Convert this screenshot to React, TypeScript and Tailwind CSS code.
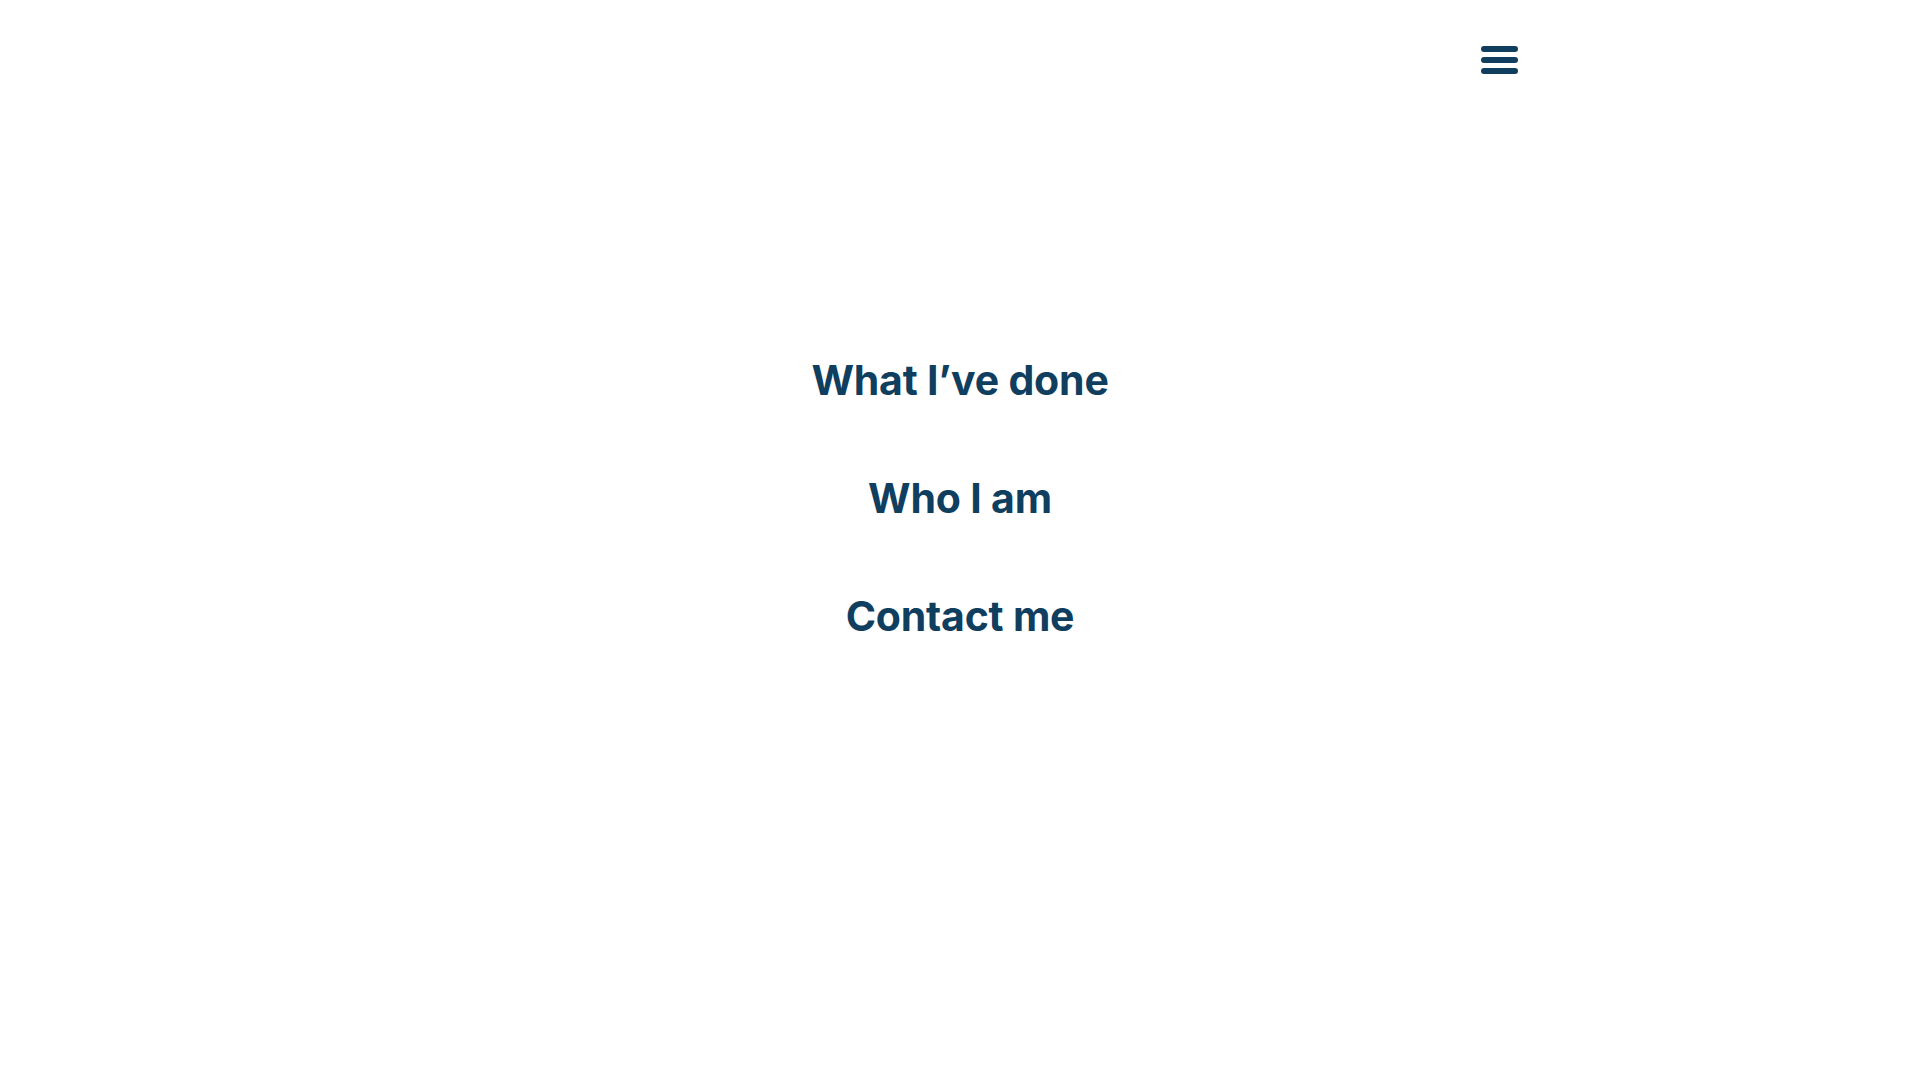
const links = ["What I’ve done", "Who I am", "Contact me"];

export default function App() {
  return (
    <div className="min-h-screen bg-white font-['Inter','Liberation_Sans',sans-serif] text-[#0f3e5f]">
      <header className="mx-auto flex max-w-[1115px] justify-end pt-[46px]">
        <button className="flex flex-col gap-[5px]" aria-label="menu">
          <span className="block h-[6px] w-[37px] rounded-full bg-[#0f3e5f]" />
          <span className="block h-[6px] w-[37px] rounded-full bg-[#0f3e5f]" />
          <span className="block h-[6px] w-[37px] rounded-full bg-[#0f3e5f]" />
        </button>
      </header>

      <nav className="mt-[282px] flex flex-col items-center gap-[70px]">
        {links.map((l) => (
          <a
            key={l}
            href="#"
            className="text-[41px] leading-[48px] font-bold tracking-[-0.2px]"
          >
            {l}
          </a>
        ))}
      </nav>
    </div>
  );
}
